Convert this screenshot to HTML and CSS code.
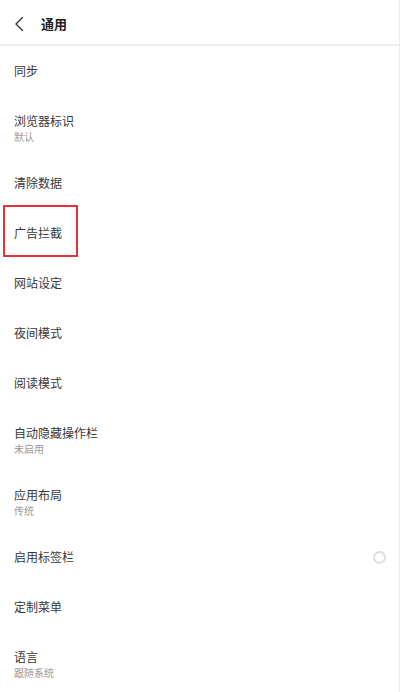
FILE: index.html
```html
<!DOCTYPE html>
<html lang="zh-CN">
<head>
<meta charset="utf-8">
<link rel="stylesheet" href="styles.css">
</head>
<body>
<div class="page">
  <header class="topbar">
    <svg class="back" width="10" height="16" viewBox="0 0 10 16"><path d="M8.5 1.5 L2 8 L8.5 14.5" fill="none" stroke="#333" stroke-width="1.4" stroke-linecap="round" stroke-linejoin="round"/></svg>
    <span class="title">通用</span>
  </header>
  <ul class="list">
    <li class="row"><span class="name">同步</span></li>
    <li class="row two"><span class="name">浏览器标识</span><span class="sub">默认</span></li>
    <li class="row"><span class="name">清除数据</span></li>
    <li class="row marked"><span class="name">广告拦截</span><span class="mark"></span></li>
    <li class="row"><span class="name">网站设定</span></li>
    <li class="row"><span class="name">夜间模式</span></li>
    <li class="row"><span class="name">阅读模式</span></li>
    <li class="row two"><span class="name">自动隐藏操作栏</span><span class="sub">未启用</span></li>
    <li class="row two"><span class="name">应用布局</span><span class="sub">传统</span></li>
    <li class="row toggle-row"><span class="name">启用标签栏</span><span class="radio"></span></li>
    <li class="row"><span class="name">定制菜单</span></li>
    <li class="row two"><span class="name">语言</span><span class="sub">跟随系统</span></li>
  </ul>
</div>
</body>
</html>
```
FILE: styles.css
```css
html, body {
  margin: 0;
  padding: 0;
  background: #fff;
}
body {
  font-family: "Noto Sans CJK SC", "Noto Sans", sans-serif;
  color: #333;
}
.page {
  width: 400px;
  height: 692px;
  overflow: hidden;
  box-sizing: border-box;
  border-right: 1px solid #ececec;
}
.topbar {
  height: 41px;
  padding-top: 3px;
  border-bottom: 2px solid #efefef;
  display: flex;
  align-items: center;
  padding-left: 14px;
  box-sizing: content-box;
}
.back {
  display: block;
  margin-right: 17px;
}
.title {
  font-size: 13px;
  font-weight: 600;
  color: #222;
  line-height: 16px;
}
.list {
  list-style: none;
  margin: 0;
  padding: 0;
}
.row {
  height: 50px;
  padding-left: 14px;
  padding-right: 13px;
  display: flex;
  flex-direction: column;
  justify-content: center;
  position: relative;
}
.row.two {
  height: 62px;
  padding-top: 3px;
  box-sizing: border-box;
}
.name {
  font-size: 12px;
  line-height: 16px;
  color: #383838;
}
.sub {
  font-size: 10px;
  line-height: 14px;
  margin-top: 1px;
  color: #9a9a9a;
}
.toggle-row {
  flex-direction: row;
  align-items: center;
  justify-content: space-between;
}
.radio {
  width: 9px;
  height: 9px;
  border: 2px solid #dedede;
  border-radius: 50%;
}
.mark {
  position: absolute;
  left: 3px;
  top: -3px;
  width: 71px;
  height: 48px;
  border: 2px solid #e5323b;
}
```
